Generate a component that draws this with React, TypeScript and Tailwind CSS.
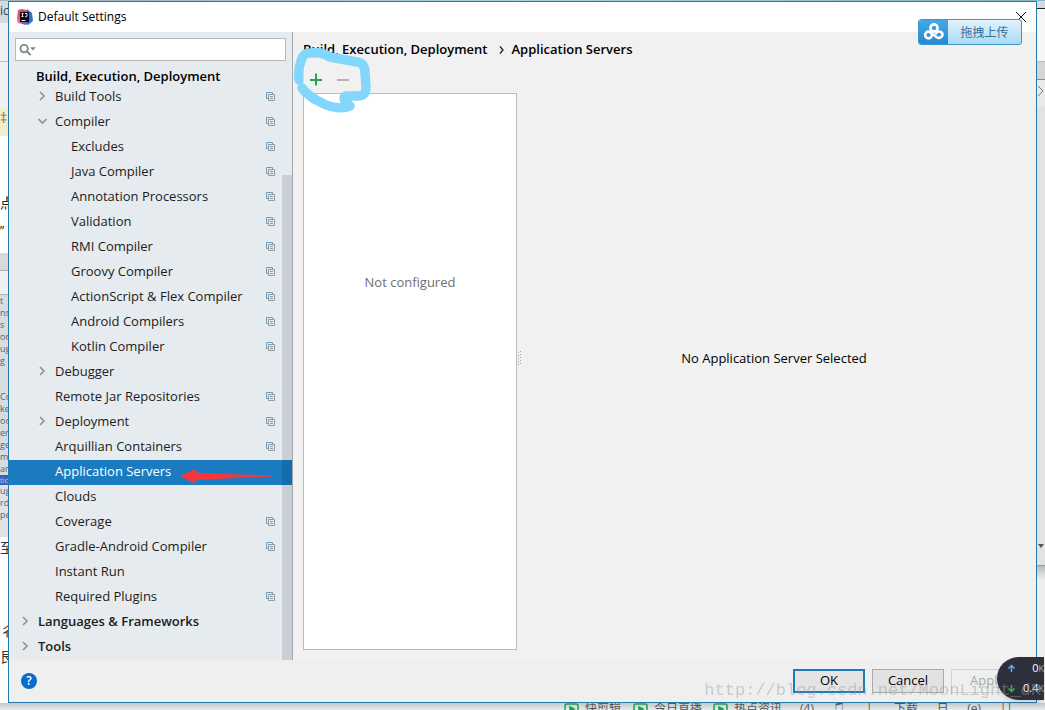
import { useState } from "react";

type Item = {
  label: string;
  level: 0 | 1 | 2;
  arrow?: "right" | "down";
  project?: boolean;
};

const items: Item[] = [
  { label: "Build Tools", level: 1, arrow: "right", project: true },
  { label: "Compiler", level: 1, arrow: "down", project: true },
  { label: "Excludes", level: 2, project: true },
  { label: "Java Compiler", level: 2, project: true },
  { label: "Annotation Processors", level: 2, project: true },
  { label: "Validation", level: 2, project: true },
  { label: "RMI Compiler", level: 2, project: true },
  { label: "Groovy Compiler", level: 2, project: true },
  { label: "ActionScript & Flex Compiler", level: 2, project: true },
  { label: "Android Compilers", level: 2, project: true },
  { label: "Kotlin Compiler", level: 2, project: true },
  { label: "Debugger", level: 1, arrow: "right" },
  { label: "Remote Jar Repositories", level: 1, project: true },
  { label: "Deployment", level: 1, arrow: "right", project: true },
  { label: "Arquillian Containers", level: 1, project: true },
  { label: "Application Servers", level: 1 },
  { label: "Clouds", level: 1 },
  { label: "Coverage", level: 1, project: true },
  { label: "Gradle-Android Compiler", level: 1, project: true },
  { label: "Instant Run", level: 1 },
  { label: "Required Plugins", level: 1, project: true },
  { label: "Languages & Frameworks", level: 0, arrow: "right" },
  { label: "Tools", level: 0, arrow: "right" },
];

const indent = { 0: "pl-[12px]", 1: "pl-[29px]", 2: "pl-[45px]" };

function IdeaLogo() {
  return (
    <svg width="16" height="16" viewBox="0 0 16 16" aria-hidden="true">
      <path d="M1 1l4-1 4 3-5 8-4-1z" fill="#f0437c" />
      <path d="M0 11l3-4 5 7-3 1-4-1z" fill="#e2707c" />
      <path d="M4 0l6 1 2 4-7 1z" fill="#b6528d" />
      <path d="M10 0l5 4 1 8-5 4-5-2 4-4z" fill="#2f6fd6" />
      <path d="M4 12h6l-1 4-4-1z" fill="#7c5cb8" />
      <rect x="3" y="3" width="9" height="10" fill="#0b0b12" />
      <path d="M4.500 4.500h2M5.500 4.500v3M4.500 7.500h2M8 4.500h2v2.500q0 .7-.8.700H8M4.500 11.500h4" stroke="#fff" strokeWidth=".9" fill="none" />
    </svg>
  );
}

function Chevron({ dir }: { dir: "right" | "down" }) {
  return (
    <svg width="10" height="10" viewBox="0 0 10 10" fill="none" stroke="#8f9497" strokeWidth="1.700" aria-hidden="true">
      {dir === "right" ? <path d="M2 1l4 4-4 4" /> : <path d="M.5 3l4 4 4-4" />}
    </svg>
  );
}

function ProjectIcon() {
  return (
    <svg width="9" height="9" viewBox="0 0 9 9" fill="none" aria-hidden="true">
      <path d="M2 6.500H.5v-6h6V2" stroke="#6d9dbb" />
      <path d="M2.500 2.500h6v6h-6z" stroke="#8e9ba5" />
      <path d="M4 4.500h3M4 6.500h3" stroke="#8e9ba5" />
    </svg>
  );
}

function TreeRow({ item, selected, onSelect }: { item: Item; selected: boolean; onSelect: () => void }) {
  return (
    <li>
      <button
        type="button"
        onClick={onSelect}
        aria-current={selected}
        className={`flex h-[25px] w-full items-center pb-[3px] pr-[17px] text-left ${indent[item.level]} ${
          selected ? "bg-[#1a7bc1] text-white" : "text-[#1c1c1c]"
        } ${item.level === 0 ? "font-semibold" : ""}`}
      >
        <span className="flex w-[17px] shrink-0">{item.arrow && <Chevron dir={item.arrow} />}</span>
        <span className="grow whitespace-nowrap leading-5">{item.label}</span>
        {item.project && <ProjectIcon />}
      </button>
    </li>
  );
}

function Sidebar() {
  const [selected, setSelected] = useState("Application Servers");
  return (
    <nav aria-label="Settings" className="flex w-[284px] shrink-0 flex-col border-r border-[#a5a9ac] bg-[#e5ebef]">
      <label className="mx-1.5 mt-1.5 flex h-[23px] items-center border border-[#b5babd] bg-white pl-[3px]">
        <svg width="20" height="14" viewBox="0 0 20 14" aria-hidden="true">
          <circle cx="5.500" cy="5.500" r="4" fill="none" stroke="#828789" strokeWidth="2" />
          <path d="M8.500 8.500l4 4" stroke="#828789" strokeWidth="2.200" />
          <path d="M12 4h6l-3 3.500z" fill="#828789" />
        </svg>
        <input type="text" aria-label="Search settings" className="w-full min-w-0 bg-transparent outline-none" />
      </label>
      <h2 className="mt-[5px] h-[19px] pl-[27px] font-semibold leading-5">Build, Execution, Deployment</h2>
      <div className="relative">
        <ul>
          {items.map((item) => (
            <TreeRow
              key={item.label}
              item={item}
              selected={item.label === selected}
              onSelect={() => setSelected(item.label)}
            />
          ))}
        </ul>
        <div className="pointer-events-none absolute bottom-0 right-0 top-[90px] w-[10px] bg-[#000a14]/12" />
        <svg className="pointer-events-none absolute left-[170px] top-[382px]" width="96" height="18" viewBox="0 0 96 18" aria-hidden="true">
          <path d="M1 9L17 1.500v4l30 1.500 46 1.500v1L47 11.500l-30 1.500v4z" fill="#f6363a" />
        </svg>
      </div>
    </nav>
  );
}

function Splitter() {
  return (
    <svg width="5" height="16" viewBox="0 0 5 16" className="shrink-0 self-center" aria-hidden="true" fill="#a3a3a3">
      <path d="M1 2h1v1H1zM1 5h1v1H1zM1 8h1v1H1zM1 11h1v1H1zM1 14h1v1H1zM3 1h1v1H3zM3 4h1v1H3zM3 7h1v1H3zM3 10h1v1H3zM3 13h1v1H3z" />
    </svg>
  );
}

function Main() {
  return (
    <main className="relative flex min-w-0 grow flex-col pb-2.5 pl-2.5 pr-2.5">
      <h1 className="flex h-[34px] items-center pt-0.5 font-semibold text-black">
        <span>Build, Execution, Deployment</span>
        <svg width="24" height="10" viewBox="0 0 24 10" fill="none" stroke="#222" strokeWidth="1.300" aria-hidden="true">
          <path d="M12 1.500l3 3.500-3 3.500" />
        </svg>
        <span>Application Servers</span>
      </h1>
      <div className="flex grow">
        <section className="flex w-[214px] shrink-0 flex-col">
          <div className="relative z-10 flex h-[27px] items-center gap-3.5 pl-1.5">
            <button type="button" aria-label="Add">
              <svg width="13" height="13" viewBox="0 0 13 13" stroke="#2f9e4f" strokeWidth="2" aria-hidden="true">
                <path d="M7 .5v12M1 7h12" />
              </svg>
            </button>
            <button type="button" aria-label="Remove" disabled>
              <svg width="13" height="13" viewBox="0 0 13 13" stroke="#b3b3b3" strokeWidth="2" aria-hidden="true">
                <path d="M1 7h12" />
              </svg>
            </button>
          </div>
          <div className="grow border border-[#bcbcbc] bg-white pt-[178px] text-center leading-5 text-[#6f6f6f]">
            Not configured
          </div>
        </section>
        <Splitter />
        <section className="flex grow items-center justify-center pt-0.5 text-black">No Application Server Selected</section>
      </div>
      <svg className="pointer-events-none absolute left-0 top-[12px]" width="84" height="72" viewBox="0 0 84 72" fill="none" stroke="#83d7fd" strokeWidth="9.500" strokeLinecap="round" strokeLinejoin="round" aria-hidden="true">
        <path d="M6 36C5 28 6 22 8 17C10 11 12 9 17 9C24 8 31 9 37 13L64 18C70 19 72 23 72 29L73 43C73 50 71 52 64 52L53 52C50 53 51 57 54 60L57 62C50 65 40 64 33 61C25 57 15 53 9 44" />
      </svg>
    </main>
  );
}

function UploadBadge() {
  return (
    <button type="button" className="absolute right-3.5 top-[17px] flex h-[26px] w-[104px] items-stretch overflow-hidden rounded-[3px] border border-[#3f97c9] bg-linear-to-b from-[#e1f3fd] to-[#a9daf5] text-[12px] text-[#376f9c]">
      <span className="flex w-[29px] shrink-0 items-center justify-center bg-linear-to-b from-[#45a9e8] to-[#2389d4]">
        <svg width="22" height="18" viewBox="0 0 22 18" fill="none" stroke="#fff" strokeWidth="2.600" aria-hidden="true">
          <circle cx="11" cy="5" r="3.600" />
          <circle cx="5.500" cy="12" r="3.400" />
          <path d="M8.500 10l5.200 4.200c2.200 1.600 5.800 0 5.800-2.500 0-3.200-4.200-4.400-6.300-1.500" strokeLinecap="round" />
        </svg>
      </span>
      <span className="grow self-center pt-px text-center">拖拽上传</span>
    </button>
  );
}

function SpeedMeter() {
  return (
    <div className="absolute bottom-[10px] right-px flex h-[43px] w-[47px] flex-col justify-between overflow-hidden rounded-l-full bg-[#2d303b] py-[2px] pl-[10px] text-[11px] leading-[18px] text-white shadow-md">
      <div className="flex items-center justify-between">
        <svg width="9" height="9" viewBox="0 0 9 9" stroke="#51b3ee" strokeWidth="1.500" fill="none" aria-hidden="true">
          <path d="M4.500 8V1.500M1.500 4.500l3-3 3 3" />
        </svg>
        <span>0<span className="text-[9px] text-[#a9abb2]">K</span></span>
      </div>
      <div className="flex items-center justify-between">
        <svg width="9" height="9" viewBox="0 0 9 9" stroke="#3cb34a" strokeWidth="1.500" fill="none" aria-hidden="true">
          <path d="M4.500 1v6.500M1.500 4.500l3 3 3-3" />
        </svg>
        <span>0.4<span className="text-[9px] text-[#a9abb2]">K</span></span>
      </div>
    </div>
  );
}

function Footer() {
  return (
    <footer className="flex h-[42px] shrink-0 items-center justify-between bg-[#efefef] pl-3 pr-[13px] text-black">
      <button type="button" aria-label="Help" className="flex size-4 items-center justify-center rounded-full bg-[#0b6bc9] text-[12px] font-semibold text-white">
        ?
      </button>
      <div className="flex gap-[7px]">
        <button type="button" className="h-6 w-[72px] border-2 border-[#1e7bb8] bg-[#e4e4e4]">OK</button>
        <button type="button" className="h-6 w-[72px] border border-[#a9a9a9] bg-[#e2e2e2]">Cancel</button>
        <button type="button" disabled className="h-6 w-[72px] border border-[#d3d3d3] text-[#a9a9a9]">Apply</button>
      </div>
    </footer>
  );
}

const leftFragments = [
  { text: "ic", style: "h-[22px] text-[12px] text-[#445] bg-[#d3dade]" },
  { text: "", style: "h-[39px] border-b border-[#b9bcbe]" },
  { text: "", style: "h-[46px]" },
  { text: "‡", style: "h-[28px] text-[14px] text-[#9a7440] bg-[#f3edcf]" },
  { text: "", style: "h-[57px] bg-white" },
  { text: "点", style: "h-[28px] text-[14px] text-[#222] bg-white" },
  { text: "”", style: "h-[32px] text-[12px] text-[#222] bg-white" },
  { text: "", style: "h-[17px] bg-[#d9d9d9]" },
  { text: "", style: "h-[25px] border-y border-[#b0b0b0]" },
];

const codeFragments = ["t", "nsi", "s", "on", "ug", "g", "", "", "Co", "ke", "oo", "er", "ge", "m", "an"];

function LeftBackdrop() {
  return (
    <div aria-hidden="true" className="flex w-2 shrink-0 flex-col overflow-hidden bg-[#eef0f1]">
      {leftFragments.map((f, i) => (
        <div key={i} className={`flex shrink-0 items-start leading-5 ${f.style}`}>{f.text}</div>
      ))}
      <div className="shrink-0 bg-[#d5dde1] text-[9px] leading-3 text-[#59626a]">
        {codeFragments.map((t, i) => (
          <div key={i} className="h-3">{t}</div>
        ))}
      </div>
      <div className="h-2.5 shrink-0 bg-[#3463c0] text-[8px] leading-2.5 text-[#b9cdf5]">tio</div>
      <div className="h-[52px] shrink-0 bg-[#dfe3e5] text-[9px] leading-3 text-[#59626a]">ug<br />rd<br />pe</div>
      <div className="h-[84px] shrink-0 bg-white text-[14px] text-[#333]">至</div>
      <div className="h-[26px] shrink-0 bg-white text-[14px] leading-5 text-[#333]">彳</div>
      <div className="grow bg-white text-[14px] leading-5 text-[#333]">艮</div>
    </div>
  );
}

function RightBackdrop() {
  return (
    <div aria-hidden="true" className="flex w-2 shrink-0 flex-col overflow-hidden bg-[#e9eaec]">
      <div className="h-2 shrink-0 border-b border-[#222] bg-[#d5d9dc]" />
      <div className="h-[53px] shrink-0 border-b border-[#b8b8b8] bg-[#f3f5f7]" />
      <div className="h-[18px] shrink-0 border-b border-[#8c8c8c] bg-[#d5d5d5]" />
      <div className="flex h-[26px] shrink-0 items-start">
        <svg width="8" height="22" viewBox="0 0 8 22" fill="none" stroke="#777"><path d="M1 6l5 5-5 5" /></svg>
      </div>
      <div className="flex grow items-end bg-[#e1e3e4]">
        <svg width="8" height="26" viewBox="0 0 8 26" fill="#555"><path d="M1 5h6l-3 4z" /></svg>
      </div>
      <div className="h-[138px] shrink-0 border-t border-[#9a9a9a] bg-linear-to-b from-[#b9bcbe] to-[#edeeee] to-10%" />
    </div>
  );
}

const taskbar = ["(4)", "♫", "↓", "下载", "日", "(e)", "||"];

function PlayIcon() {
  return (
    <svg width="15" height="12" viewBox="0 0 15 12" fill="none" stroke="#249b55" strokeWidth="1.500">
      <rect x="1" y="1" width="13" height="10" rx="2" />
      <path d="M6 4l4 2-4 2z" fill="#249b55" />
    </svg>
  );
}

function BottomBackdrop() {
  return (
    <div aria-hidden="true" className="flex h-[7px] shrink-0 items-start overflow-hidden bg-linear-to-b from-[#c2c9ce] to-[#e8ebec] pl-[564px] text-[12px] leading-3 text-[#555]">
      <div className="flex w-[69px] shrink-0 gap-1.5"><PlayIcon />快剪辑</div>
      <div className="flex w-[80px] shrink-0 gap-1.5"><PlayIcon />今日直播</div>
      <div className="flex w-[87px] shrink-0 gap-1.5"><PlayIcon />热点资讯</div>
      <div className="flex grow justify-between whitespace-nowrap pr-8">
        {taskbar.map((t) => <span key={t}>{t}</span>)}
      </div>
    </div>
  );
}

export default function App() {
  return (
    <div className="relative flex min-h-screen flex-col overflow-hidden bg-[#e9ecee] font-['Open_Sans','Noto_Sans_CJK_SC',sans-serif] text-[13px]">
      <div className="h-px shrink-0 bg-linear-to-r from-[#9db4bf] via-[#a9d2e4] to-[#84b6cc]" />
      <div className="flex grow">
        <LeftBackdrop />
        <div role="dialog" aria-label="Default Settings" className="relative flex min-w-0 grow flex-col border border-[#2478aa] bg-[#f1f1f1]">
          <header className="flex h-[30px] shrink-0 items-center bg-white pl-2 pr-[9px] text-[12px] text-black">
            <IdeaLogo />
            <span className="grow pl-[5px]">Default Settings</span>
            <button type="button" aria-label="Close">
              <svg width="12" height="12" viewBox="0 0 12 12" stroke="#111" aria-hidden="true">
                <path d="M1 1l10 10M11 1L1 11" />
              </svg>
            </button>
          </header>
          <div className="flex grow">
            <Sidebar />
            <Main />
          </div>
          <Footer />
          <UploadBadge />
        </div>
        <RightBackdrop />
      </div>
      <BottomBackdrop />
      <SpeedMeter />
      <div className="pointer-events-none absolute bottom-[7px] right-[4px] whitespace-nowrap font-['Liberation_Mono',monospace] text-[17px] leading-6 text-[#999999]/45">
        http://blog.csdn.net/MoonLight_dR
      </div>
    </div>
  );
}
